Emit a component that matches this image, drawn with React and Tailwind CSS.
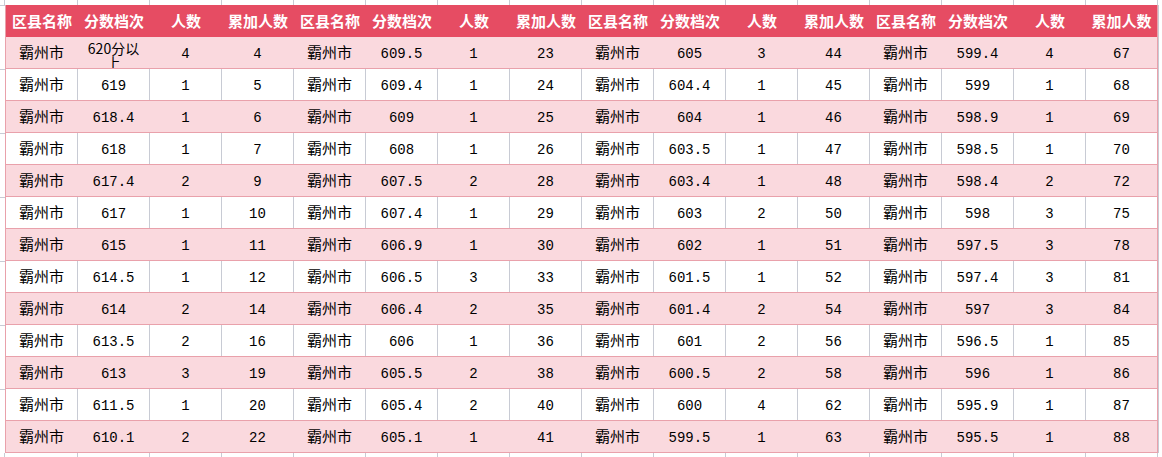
const headers = ["区县名称", "分数档次", "人数", "累加人数"];

const groups = [
  [
    ["620分以上", 4, 4],
    ["619", 1, 5],
    ["618.4", 1, 6],
    ["618", 1, 7],
    ["617.4", 2, 9],
    ["617", 1, 10],
    ["615", 1, 11],
    ["614.5", 1, 12],
    ["614", 2, 14],
    ["613.5", 2, 16],
    ["613", 3, 19],
    ["611.5", 1, 20],
    ["610.1", 2, 22],
  ],
  [
    ["609.5", 1, 23],
    ["609.4", 1, 24],
    ["609", 1, 25],
    ["608", 1, 26],
    ["607.5", 2, 28],
    ["607.4", 1, 29],
    ["606.9", 1, 30],
    ["606.5", 3, 33],
    ["606.4", 2, 35],
    ["606", 1, 36],
    ["605.5", 2, 38],
    ["605.4", 2, 40],
    ["605.1", 1, 41],
  ],
  [
    ["605", 3, 44],
    ["604.4", 1, 45],
    ["604", 1, 46],
    ["603.5", 1, 47],
    ["603.4", 1, 48],
    ["603", 2, 50],
    ["602", 1, 51],
    ["601.5", 1, 52],
    ["601.4", 2, 54],
    ["601", 2, 56],
    ["600.5", 2, 58],
    ["600", 4, 62],
    ["599.5", 1, 63],
  ],
  [
    ["599.4", 4, 67],
    ["599", 1, 68],
    ["598.9", 1, 69],
    ["598.5", 1, 70],
    ["598.4", 2, 72],
    ["598", 3, 75],
    ["597.5", 3, 78],
    ["597.4", 3, 81],
    ["597", 3, 84],
    ["596.5", 1, 85],
    ["596", 1, 86],
    ["595.9", 1, 87],
    ["595.5", 1, 88],
  ],
];

const rows = groups[0].map((_, i) =>
  groups.flatMap((g) => ["霸州市", g[i][0], String(g[i][1]), String(g[i][2])])
);

const cjk = { fontFamily: '"Noto Sans CJK SC", "Liberation Sans", sans-serif' };
const mono = {
  fontFamily: '"Liberation Mono", "Noto Sans CJK SC", monospace',
};

// spreadsheet grid strip above / below the table
const GridStrip = ({ h }) => (
  <div className={`flex ${h}`}>
    <div className="w-[5px] border-r border-[#c8cbd4]" />
    <div className="w-[1px]" />
    {Array.from({ length: 16 }).map((_, i) => (
      <div key={i} className="w-[72px] shrink-0 border-r border-[#c8cbd4]" />
    ))}
  </div>
);

const Cell = ({ value, col, pink, last }) => {
  const isName = col % 4 === 0;
  const isCjk = /[\u4e00-\u9fff]/.test(value);
  return (
    <div
      className={`w-[72px] shrink-0 h-full flex items-center justify-center text-center text-black px-[3px] overflow-hidden border-r ${
        last
          ? "border-[#e9a1ab]"
          : pink
          ? "border-transparent"
          : "border-[#c8cbd4]"
      }`}
    >
      {isName ? (
        <span className="text-[15px] leading-none pb-[3px]" style={cjk}>
          {value}
        </span>
      ) : isCjk ? (
        <span className="text-[14px] leading-[14px] pt-[4px]" style={cjk}>
          {value}
        </span>
      ) : (
        <span className="text-[14px] leading-none pt-[2px]" style={mono}>
          {value}
        </span>
      )}
    </div>
  );
};

export default function App() {
  return (
    <div className="w-[1162px] h-[457px] bg-white overflow-hidden">
      <GridStrip h="h-[5px]" />
      <div className="flex">
        <div className="w-[5px] flex flex-col">
          {Array.from({ length: 7 }).map((_, i) => (
            <div key={i} className="h-[64px] border-t border-[#c8cbd4]" />
          ))}
        </div>
        <div className="border-l border-[#e9a1ab] flex flex-col">
          <div className="flex h-[32px] bg-[#e64c63]">
            {Array.from({ length: 16 }).map((_, i) => (
              <div
                key={i}
                className={`w-[72px] shrink-0 flex items-center justify-center text-white text-[15px] font-bold ${
                  i === 15 ? "border-r border-[#e9a1ab]" : ""
                }`}
                style={cjk}
              >
                {headers[i % 4]}
              </div>
            ))}
          </div>
          {rows.map((row, r) => {
            const pink = r % 2 === 0;
            return (
              <div
                key={r}
                className={`flex h-[32px] border-b border-[#e9a1ab] ${
                  pink ? "bg-[#fad9de]" : "bg-white"
                }`}
              >
                {row.map((v, c) => (
                  <Cell key={c} value={v} col={c} pink={pink} last={c === 15} />
                ))}
              </div>
            );
          })}
        </div>
        <div className="flex-1 border-l border-[#c8cbd4]" />
      </div>
      <GridStrip h="h-[4px]" />
    </div>
  );
}
